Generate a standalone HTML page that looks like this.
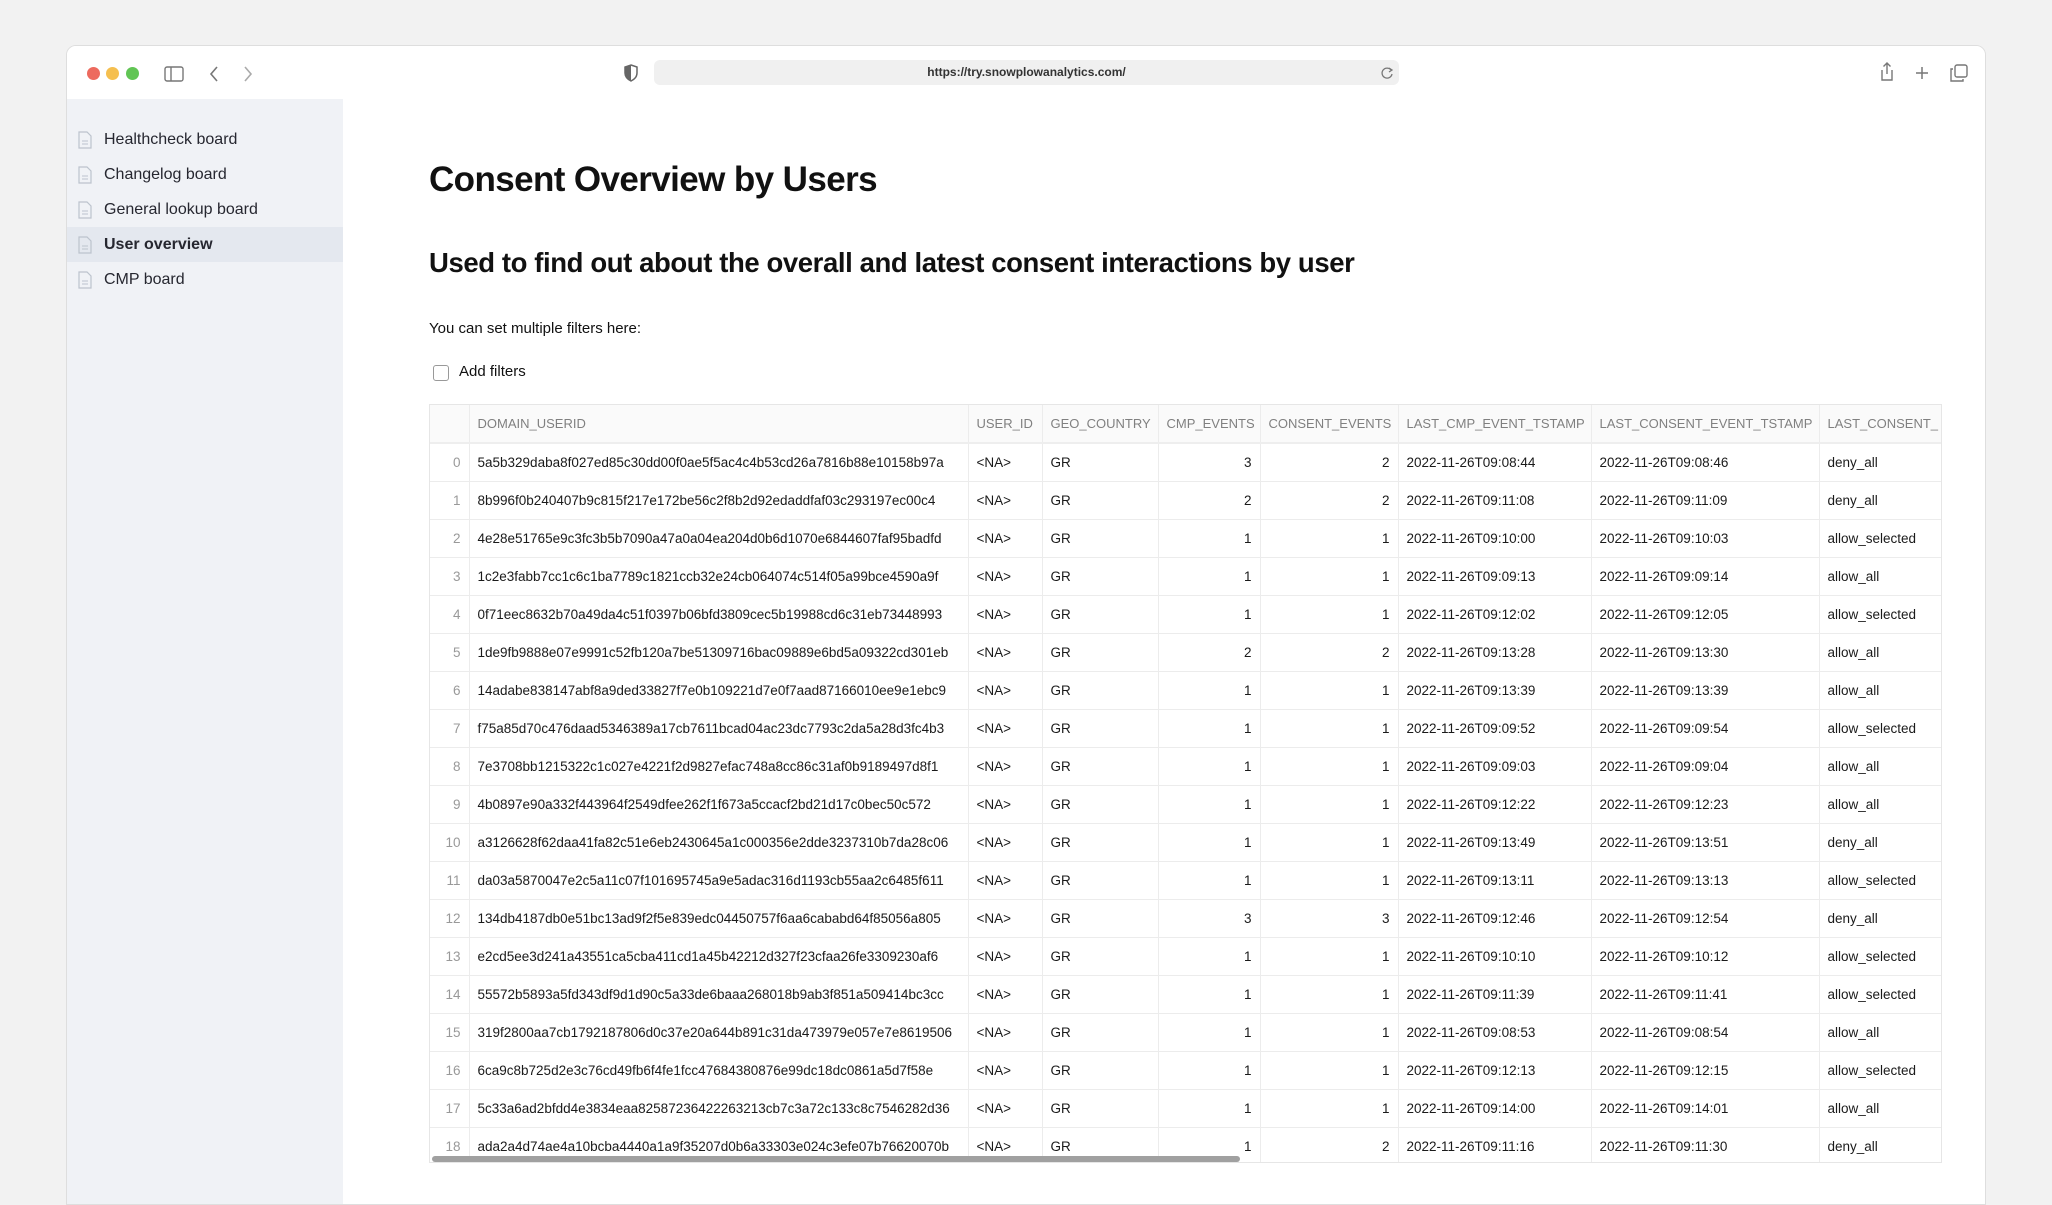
<!DOCTYPE html>
<html><head><meta charset="utf-8"><style>
*{box-sizing:border-box;margin:0;padding:0}
body{width:2052px;height:1189px;background:#f2f2f2;font-family:"Liberation Sans",sans-serif;position:relative;overflow:hidden;color:#262730}
.win{position:absolute;left:66px;top:45px;width:1920px;height:1160px;background:#fff;border-radius:10px 10px 0 0;border:1px solid #dedede;overflow:hidden}
.tb{position:absolute;left:0;top:0;width:100%;height:53px;background:#fff}
.dot{position:absolute;top:21px;width:13px;height:13px;border-radius:50%}
.url{position:absolute;left:587px;top:14px;width:745px;height:25px;background:#f0f0f0;border-radius:6px;font-size:12px;font-weight:bold;text-align:center;line-height:25px;color:#333}
.side{position:absolute;left:0;top:53px;width:276px;height:1110px;background:#f0f2f6}
.item{position:absolute;left:0;width:276px;height:35px;font-size:16px;line-height:35px;padding-left:37px;color:#262730}
.item svg{position:absolute;left:11px;top:9px}
.sel{background:#e4e8ef}
h1{position:absolute;left:362px;top:114px;font-size:35px;font-weight:bold;letter-spacing:-0.6px;white-space:nowrap;color:#111}
h2{position:absolute;left:362px;top:201px;font-size:27.5px;font-weight:bold;letter-spacing:-0.4px;white-space:nowrap;color:#111}
.p{position:absolute;left:362px;top:274px;font-size:15px;color:#111}
.cb{position:absolute;left:366px;top:319px;width:16px;height:16px;border:1.5px solid #999;border-radius:3px}
.cbl{position:absolute;left:392px;top:317px;font-size:15px;color:#111}
.tw{position:absolute;left:362px;top:358px;width:1513px;height:759px;border:1px solid #e6e6e6;overflow:hidden}
table{border-collapse:collapse;table-layout:fixed;font-size:13.5px;white-space:nowrap;width:1522px;color:#1a1a1a}
td,th{height:38px;border-right:1px solid #ececec;border-bottom:1px solid #ececec;padding:0 8px;overflow:hidden;font-weight:normal;text-align:left}
th{background:#fafafa;color:#808080;font-size:13px;border-bottom:2px solid #eee}
td.i{color:#999;text-align:right;padding-right:8px}
td.n{text-align:right}
.sb{position:absolute;left:2px;bottom:0;width:808px;height:6px;background:#a0a0a0;border-radius:3px}
</style></head><body>
<div class="win">
 <div class="tb">
  <div class="dot" style="left:20px;background:#ed6a5e"></div>
  <div class="dot" style="left:39px;background:#f5bf4f"></div>
  <div class="dot" style="left:59px;background:#61c554"></div>
  <svg style="position:absolute;left:97px;top:20px" width="20" height="16" viewBox="0 0 20 16"><rect x="1" y="1" width="18" height="14" rx="2" fill="none" stroke="#777" stroke-width="1.4"/><line x1="7" y1="1" x2="7" y2="15" stroke="#777" stroke-width="1.4"/></svg>
  <svg style="position:absolute;left:141px;top:19px" width="12" height="18"><path d="M9 2 L3 9 L9 16" fill="none" stroke="#777" stroke-width="1.6"/></svg>
  <svg style="position:absolute;left:175px;top:19px" width="12" height="18"><path d="M3 2 L9 9 L3 16" fill="none" stroke="#aaa" stroke-width="1.6"/></svg>
  <svg style="position:absolute;left:556px;top:18px" width="16" height="18"><path d="M8 1 L14 3 L14 9 Q14 14 8 17 Q2 14 2 9 L2 3 Z" fill="none" stroke="#666" stroke-width="1.5"/><path d="M8 1 L8 17 Q2 14 2 9 L2 3 Z" fill="#666"/></svg>
  <div class="url">https://try.snowplowanalytics.com/</div>
  <svg style="position:absolute;left:1313px;top:20px" width="14" height="14"><path d="M11 4 A5 5 0 1 0 12 8" fill="none" stroke="#777" stroke-width="1.3"/><path d="M9 2 L12 4 L9 6" fill="none" stroke="#777" stroke-width="1.3"/></svg>
  <svg style="position:absolute;left:1812px;top:15px" width="16" height="22"><path d="M3 9 L3 19 L13 19 L13 9" fill="none" stroke="#777" stroke-width="1.4"/><path d="M8 2 L8 13 M4.5 5.5 L8 2 L11.5 5.5" fill="none" stroke="#777" stroke-width="1.4"/></svg>
  <svg style="position:absolute;left:1847px;top:19px" width="16" height="16"><path d="M8 2 L8 14 M2 8 L14 8" stroke="#777" stroke-width="1.5"/></svg>
  <svg style="position:absolute;left:1883px;top:18px" width="18" height="18"><rect x="5" y="1" width="12" height="12" rx="2" fill="none" stroke="#777" stroke-width="1.4"/><path d="M3 5 L1 5 L1 17 L13 17 L13 15" fill="none" stroke="#777" stroke-width="1.4"/></svg>
 </div>
 <div class="side">
  <div class="item" style="top:23px"><svg width="14" height="18"><path d="M1 1 L9 1 L13 5 L13 17 L1 17 Z" fill="none" stroke="#bcc3cd" stroke-width="1.2"/><path d="M4 10 L10 10 M4 13 L10 13" stroke="#bcc3cd"/></svg>Healthcheck board</div>
  <div class="item" style="top:58px"><svg width="14" height="18"><path d="M1 1 L9 1 L13 5 L13 17 L1 17 Z" fill="none" stroke="#bcc3cd" stroke-width="1.2"/><path d="M4 10 L10 10 M4 13 L10 13" stroke="#bcc3cd"/></svg>Changelog board</div>
  <div class="item" style="top:93px"><svg width="14" height="18"><path d="M1 1 L9 1 L13 5 L13 17 L1 17 Z" fill="none" stroke="#bcc3cd" stroke-width="1.2"/><path d="M4 10 L10 10 M4 13 L10 13" stroke="#bcc3cd"/></svg>General lookup board</div>
  <div class="item sel" style="top:128px;font-weight:bold"><svg width="14" height="18"><path d="M1 1 L9 1 L13 5 L13 17 L1 17 Z" fill="none" stroke="#bcc3cd" stroke-width="1.2"/><path d="M4 10 L10 10 M4 13 L10 13" stroke="#bcc3cd"/></svg>User overview</div>
  <div class="item" style="top:163px"><svg width="14" height="18"><path d="M1 1 L9 1 L13 5 L13 17 L1 17 Z" fill="none" stroke="#bcc3cd" stroke-width="1.2"/><path d="M4 10 L10 10 M4 13 L10 13" stroke="#bcc3cd"/></svg>CMP board</div>
 </div>
 <h1>Consent Overview by Users</h1>
 <h2>Used to find out about the overall and latest consent interactions by user</h2>
 <div class="p">You can set multiple filters here:</div>
 <div class="cb"></div><div class="cbl">Add filters</div>
 <div class="tw">
 <table>
 <colgroup><col style="width:39px"><col style="width:499px"><col style="width:74px"><col style="width:116px"><col style="width:102px"><col style="width:138px"><col style="width:193px"><col style="width:228px"><col style="width:133px"></colgroup>
 <tr><th></th><th>DOMAIN_USERID</th><th>USER_ID</th><th>GEO_COUNTRY</th><th>CMP_EVENTS</th><th>CONSENT_EVENTS</th><th>LAST_CMP_EVENT_TSTAMP</th><th>LAST_CONSENT_EVENT_TSTAMP</th><th>LAST_CONSENT_</th></tr>
 <tr><td class="i">0</td><td>5a5b329daba8f027ed85c30dd00f0ae5f5ac4c4b53cd26a7816b88e10158b97a</td><td>&lt;NA&gt;</td><td>GR</td><td class="n">3</td><td class="n">2</td><td>2022-11-26T09:08:44</td><td>2022-11-26T09:08:46</td><td>deny_all</td></tr>
 <tr><td class="i">1</td><td>8b996f0b240407b9c815f217e172be56c2f8b2d92edaddfaf03c293197ec00c4</td><td>&lt;NA&gt;</td><td>GR</td><td class="n">2</td><td class="n">2</td><td>2022-11-26T09:11:08</td><td>2022-11-26T09:11:09</td><td>deny_all</td></tr>
 <tr><td class="i">2</td><td>4e28e51765e9c3fc3b5b7090a47a0a04ea204d0b6d1070e6844607faf95badfd</td><td>&lt;NA&gt;</td><td>GR</td><td class="n">1</td><td class="n">1</td><td>2022-11-26T09:10:00</td><td>2022-11-26T09:10:03</td><td>allow_selected</td></tr>
 <tr><td class="i">3</td><td>1c2e3fabb7cc1c6c1ba7789c1821ccb32e24cb064074c514f05a99bce4590a9f</td><td>&lt;NA&gt;</td><td>GR</td><td class="n">1</td><td class="n">1</td><td>2022-11-26T09:09:13</td><td>2022-11-26T09:09:14</td><td>allow_all</td></tr>
 <tr><td class="i">4</td><td>0f71eec8632b70a49da4c51f0397b06bfd3809cec5b19988cd6c31eb73448993</td><td>&lt;NA&gt;</td><td>GR</td><td class="n">1</td><td class="n">1</td><td>2022-11-26T09:12:02</td><td>2022-11-26T09:12:05</td><td>allow_selected</td></tr>
 <tr><td class="i">5</td><td>1de9fb9888e07e9991c52fb120a7be51309716bac09889e6bd5a09322cd301eb</td><td>&lt;NA&gt;</td><td>GR</td><td class="n">2</td><td class="n">2</td><td>2022-11-26T09:13:28</td><td>2022-11-26T09:13:30</td><td>allow_all</td></tr>
 <tr><td class="i">6</td><td>14adabe838147abf8a9ded33827f7e0b109221d7e0f7aad87166010ee9e1ebc9</td><td>&lt;NA&gt;</td><td>GR</td><td class="n">1</td><td class="n">1</td><td>2022-11-26T09:13:39</td><td>2022-11-26T09:13:39</td><td>allow_all</td></tr>
 <tr><td class="i">7</td><td>f75a85d70c476daad5346389a17cb7611bcad04ac23dc7793c2da5a28d3fc4b3</td><td>&lt;NA&gt;</td><td>GR</td><td class="n">1</td><td class="n">1</td><td>2022-11-26T09:09:52</td><td>2022-11-26T09:09:54</td><td>allow_selected</td></tr>
 <tr><td class="i">8</td><td>7e3708bb1215322c1c027e4221f2d9827efac748a8cc86c31af0b9189497d8f1</td><td>&lt;NA&gt;</td><td>GR</td><td class="n">1</td><td class="n">1</td><td>2022-11-26T09:09:03</td><td>2022-11-26T09:09:04</td><td>allow_all</td></tr>
 <tr><td class="i">9</td><td>4b0897e90a332f443964f2549dfee262f1f673a5ccacf2bd21d17c0bec50c572</td><td>&lt;NA&gt;</td><td>GR</td><td class="n">1</td><td class="n">1</td><td>2022-11-26T09:12:22</td><td>2022-11-26T09:12:23</td><td>allow_all</td></tr>
 <tr><td class="i">10</td><td>a3126628f62daa41fa82c51e6eb2430645a1c000356e2dde3237310b7da28c06</td><td>&lt;NA&gt;</td><td>GR</td><td class="n">1</td><td class="n">1</td><td>2022-11-26T09:13:49</td><td>2022-11-26T09:13:51</td><td>deny_all</td></tr>
 <tr><td class="i">11</td><td>da03a5870047e2c5a11c07f101695745a9e5adac316d1193cb55aa2c6485f611</td><td>&lt;NA&gt;</td><td>GR</td><td class="n">1</td><td class="n">1</td><td>2022-11-26T09:13:11</td><td>2022-11-26T09:13:13</td><td>allow_selected</td></tr>
 <tr><td class="i">12</td><td>134db4187db0e51bc13ad9f2f5e839edc04450757f6aa6cababd64f85056a805</td><td>&lt;NA&gt;</td><td>GR</td><td class="n">3</td><td class="n">3</td><td>2022-11-26T09:12:46</td><td>2022-11-26T09:12:54</td><td>deny_all</td></tr>
 <tr><td class="i">13</td><td>e2cd5ee3d241a43551ca5cba411cd1a45b42212d327f23cfaa26fe3309230af6</td><td>&lt;NA&gt;</td><td>GR</td><td class="n">1</td><td class="n">1</td><td>2022-11-26T09:10:10</td><td>2022-11-26T09:10:12</td><td>allow_selected</td></tr>
 <tr><td class="i">14</td><td>55572b5893a5fd343df9d1d90c5a33de6baaa268018b9ab3f851a509414bc3cc</td><td>&lt;NA&gt;</td><td>GR</td><td class="n">1</td><td class="n">1</td><td>2022-11-26T09:11:39</td><td>2022-11-26T09:11:41</td><td>allow_selected</td></tr>
 <tr><td class="i">15</td><td>319f2800aa7cb1792187806d0c37e20a644b891c31da473979e057e7e8619506</td><td>&lt;NA&gt;</td><td>GR</td><td class="n">1</td><td class="n">1</td><td>2022-11-26T09:08:53</td><td>2022-11-26T09:08:54</td><td>allow_all</td></tr>
 <tr><td class="i">16</td><td>6ca9c8b725d2e3c76cd49fb6f4fe1fcc47684380876e99dc18dc0861a5d7f58e</td><td>&lt;NA&gt;</td><td>GR</td><td class="n">1</td><td class="n">1</td><td>2022-11-26T09:12:13</td><td>2022-11-26T09:12:15</td><td>allow_selected</td></tr>
 <tr><td class="i">17</td><td>5c33a6ad2bfdd4e3834eaa82587236422263213cb7c3a72c133c8c7546282d36</td><td>&lt;NA&gt;</td><td>GR</td><td class="n">1</td><td class="n">1</td><td>2022-11-26T09:14:00</td><td>2022-11-26T09:14:01</td><td>allow_all</td></tr>
 <tr><td class="i">18</td><td>ada2a4d74ae4a10bcba4440a1a9f35207d0b6a33303e024c3efe07b76620070b</td><td>&lt;NA&gt;</td><td>GR</td><td class="n">1</td><td class="n">2</td><td>2022-11-26T09:11:16</td><td>2022-11-26T09:11:30</td><td>deny_all</td></tr>
 </table>
 <div class="sb"></div>
 </div>
</div>
</body></html>
